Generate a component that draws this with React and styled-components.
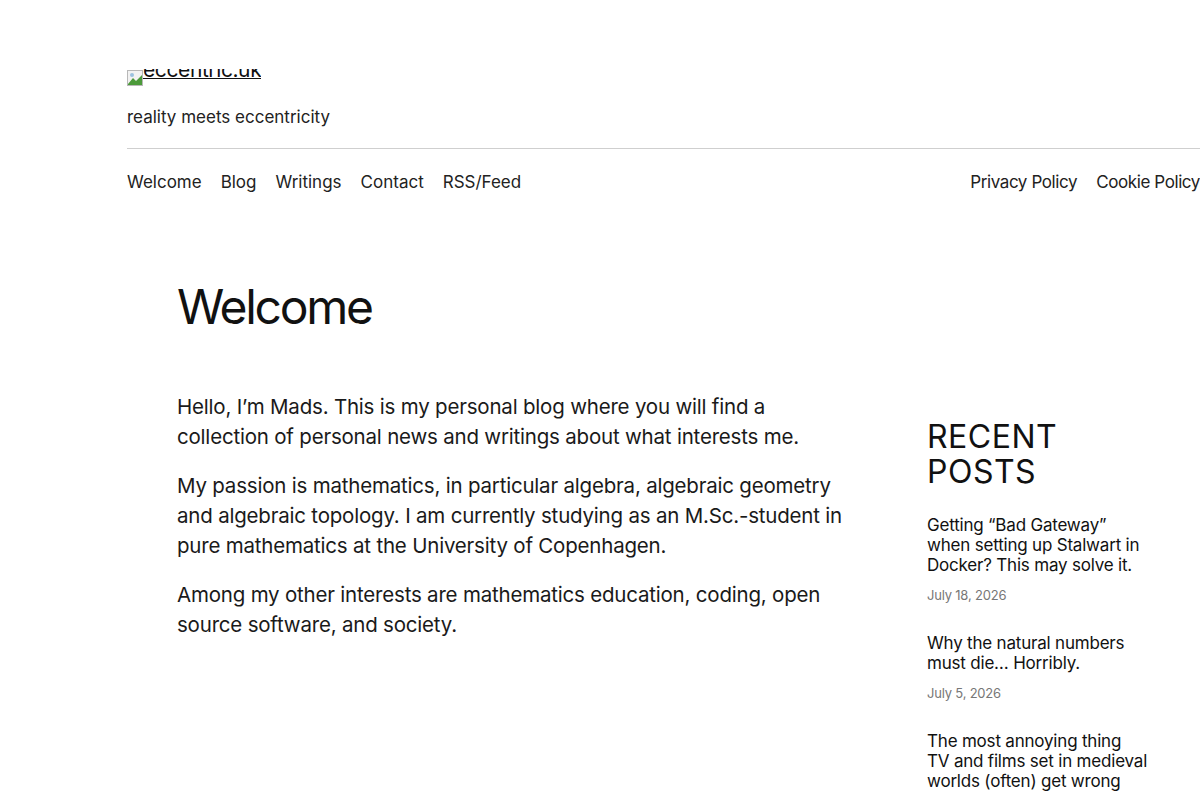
import React from "react";
import styled, { createGlobalStyle } from "styled-components";

const posts = [
  {
    title: "Getting “Bad Gateway” when setting up Stalwart in Docker? This may solve it.",
    date: "July 18, 2026",
  },
  {
    title: "Why the natural numbers must die… Horribly.",
    date: "July 5, 2026",
  },
  {
    title: "The most annoying thing TV\u00a0and films set in medieval worlds (often) get wrong",
    date: "June 30, 2026",
  },
];

const mainLinks = ["Welcome", "Blog", "Writings", "Contact", "RSS/Feed"];
const policyLinks = ["Privacy Policy", "Cookie Policy"];

// placeholder glyph the browser shows for a logo that failed to load
const BrokenImage = () => (
  <svg width="16" height="16" viewBox="0 0 16 16">
    <rect x="0.5" y="0.5" width="15" height="15" fill="#f2f2f2" stroke="#b8b8b8" />
    <path d="M1 14 L6 8 L9 11 L15 5 L15 15 L1 15 Z" fill="#4c9a3a" />
    <circle cx="5" cy="5" r="2" fill="#9cc2e0" />
  </svg>
);

const App = () => {
  return (
    <>
      <GlobalStyle />
      <Page>
        <Header>
          <Logo href="#">
            <BrokenImage />
            <LogoAlt>
              <span>eccentric.uk</span>
            </LogoAlt>
          </Logo>
          <Tagline>reality meets eccentricity</Tagline>
          <NavBar>
            <NavGroup>
              {mainLinks.map((l) => (
                <NavLink key={l} href="#">
                  {l}
                </NavLink>
              ))}
            </NavGroup>
            <NavGroup>
              {policyLinks.map((l) => (
                <NavLink key={l} href="#" $tight>
                  {l}
                </NavLink>
              ))}
            </NavGroup>
          </NavBar>
        </Header>

        <Main>
          <Title>Welcome</Title>
          <Columns>
            <Content>
              <Para>
                Hello, I’m Mads. This is my personal blog where you will find a
                collection of personal news and writings about what interests me.
              </Para>
              <Para>
                My passion is mathematics, in particular algebra, algebraic
                geometry and algebraic topology. I am currently studying as an
                M.Sc.-student in pure mathematics at the University of Copenhagen.
              </Para>
              <Para>
                Among my other interests are mathematics education, coding, open
                source software, and society.
              </Para>
            </Content>
            <Sidebar>
              <SideTitle>Recent Posts</SideTitle>
              <PostList>
                {posts.map((p) => (
                  <Post key={p.title}>
                    <PostTitle href="#">{p.title}</PostTitle>
                    <PostDate>{p.date}</PostDate>
                  </Post>
                ))}
              </PostList>
            </Sidebar>
          </Columns>
        </Main>
      </Page>
    </>
  );
};

const GlobalStyle = createGlobalStyle`
  body {
    margin: 0;
    background: #ffffff;
    color: #111111;
    font-family: Inter, "Noto Sans", sans-serif;
  }
  a {
    color: inherit;
    text-decoration: none;
  }
`;

const Page = styled.div`
  width: 1200px;
  overflow: hidden;
`;

const Header = styled.header`
  padding: 66px 0 0 127px;
`;

const Logo = styled.a`
  display: flex;
  align-items: flex-start;
  width: fit-content;
  height: 20px;

  svg {
    flex-shrink: 0;
    margin-top: 4px;
  }
`;

/* alt text of the broken logo, clipped by the image box */
const LogoAlt = styled.span`
  display: block;
  margin-top: 3px;
  height: 11px;
  overflow: hidden;

  span {
    display: block;
    margin-top: -12px;
    font-size: 21px;
    line-height: 25px;
    letter-spacing: -0.4px;
    text-decoration: underline;
    text-decoration-thickness: 1px;
    text-underline-offset: 1px;
  }
`;

const Tagline = styled.p`
  margin: 19px 0 0;
  font-size: 17px;
  line-height: 24px;
  letter-spacing: 0;
  color: #222;
`;

const NavBar = styled.nav`
  margin-top: 19px;
  border-top: 1px solid #cfcfcf;
  padding-top: 21px;
  display: flex;
  justify-content: space-between;
`;

const NavGroup = styled.div`
  display: flex;
  gap: 19px;
`;

const NavLink = styled.a`
  font-size: 17px;
  line-height: 24px;
  letter-spacing: ${(p) => (p.$tight ? "-0.4px" : "0")};
  color: #222;
`;

const Main = styled.main`
  padding: 83px 48px 0 177px;
`;

const Title = styled.h1`
  margin: 0;
  font-size: 48px;
  line-height: 60px;
  font-weight: 400;
  letter-spacing: -2.3px;
`;

const Columns = styled.div`
  display: grid;
  grid-template-columns: 680px 226px;
  column-gap: 70px;
  margin-top: 55px;
`;

const Content = styled.div``;

const Para = styled.p`
  margin: 0 0 19px;
  font-size: 20.5px;
  line-height: 30px;
  letter-spacing: -0.2px;
  color: #1a1a1a;
`;

const Sidebar = styled.aside`
  padding-top: 27px;
`;

const SideTitle = styled.h2`
  margin: 0;
  font-size: 32px;
  line-height: 35px;
  font-weight: 400;
  text-transform: uppercase;
  letter-spacing: 0.5px;
`;

const PostList = styled.ul`
  list-style: none;
  margin: 26px 0 0;
  padding: 0;
  display: flex;
  flex-direction: column;
  gap: 28px;
`;

const Post = styled.li`
  display: flex;
  flex-direction: column;
  gap: 10px;
`;

const PostTitle = styled.a`
  font-size: 17px;
  line-height: 20px;
  letter-spacing: -0.2px;
  color: #111;
`;

const PostDate = styled.span`
  font-size: 13px;
  line-height: 20px;
  color: #777;
  letter-spacing: -0.2px;
`;

export default App;
